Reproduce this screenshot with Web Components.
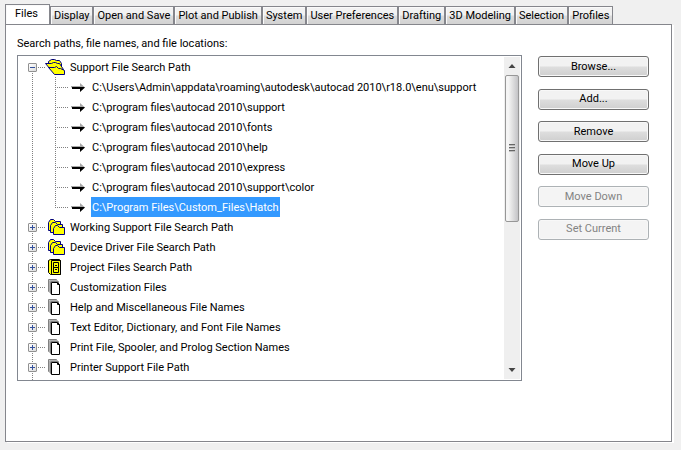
<!DOCTYPE html>
<html lang="en">
<head>
<meta charset="utf-8">
<title>Options</title>
<style>
  body {
    margin: 0;
    background-color: #f0f0f0;
    color: #000;
    font: 11px/16px Roboto, "Liberation Sans", sans-serif;
  }
</style>
</head>
<body>
<options-dialog>
  <tab-strip slot="tabs">
    <tab-button selected>Files</tab-button>
    <tab-button>Display</tab-button>
    <tab-button>Open and Save</tab-button>
    <tab-button>Plot and Publish</tab-button>
    <tab-button>System</tab-button>
    <tab-button>User Preferences</tab-button>
    <tab-button>Drafting</tab-button>
    <tab-button>3D Modeling</tab-button>
    <tab-button>Selection</tab-button>
    <tab-button>Profiles</tab-button>
  </tab-strip>
  <span slot="caption">Search paths, file names, and file locations:</span>
  <path-tree>
    <tree-node icon="open" expanded>Support File Search Path
      <tree-leaf slot="children">C:\Users\Admin\appdata\roaming\autodesk\autocad 2010\r18.0\enu\support</tree-leaf>
      <tree-leaf slot="children">C:\program files\autocad 2010\support</tree-leaf>
      <tree-leaf slot="children">C:\program files\autocad 2010\fonts</tree-leaf>
      <tree-leaf slot="children">C:\program files\autocad 2010\help</tree-leaf>
      <tree-leaf slot="children">C:\program files\autocad 2010\express</tree-leaf>
      <tree-leaf slot="children">C:\program files\autocad 2010\support\color</tree-leaf>
      <tree-leaf slot="children" selected>C:\Program Files\Custom_Files\Hatch</tree-leaf>
    </tree-node>
    <tree-node icon="folders">Working Support File Search Path</tree-node>
    <tree-node icon="folders">Device Driver File Search Path</tree-node>
    <tree-node icon="cabinet">Project Files Search Path</tree-node>
    <tree-node icon="pages">Customization Files</tree-node>
    <tree-node icon="pages">Help and Miscellaneous File Names</tree-node>
    <tree-node icon="pages">Text Editor, Dictionary, and Font File Names</tree-node>
    <tree-node icon="pages">Print File, Spooler, and Prolog Section Names</tree-node>
    <tree-node icon="pages">Printer Support File Path</tree-node>
  </path-tree>
  <push-button slot="actions">Browse...</push-button>
  <push-button slot="actions">Add...</push-button>
  <push-button slot="actions">Remove</push-button>
  <push-button slot="actions">Move Up</push-button>
  <push-button slot="actions" disabled>Move Down</push-button>
  <push-button slot="actions" disabled>Set Current</push-button>
</options-dialog>

<script>
const ICONS = {
  open: `
    <g fill="#ffff00" stroke="#000080" stroke-width="1">
      <path d="M3.5 7.5V4.5L6.5 2.5H9.5L11.5 3.5H14.5L16.5 6.5V12.5H9.5Z"/>
      <path d="M5.5 12.5L0.5 6.5H6.5L8.5 5.5H10.5L12.5 6.5H14.5L18.5 12.5Z"/>
      <path d="M9.5 17.5L3.5 10.5H9.5L11.5 9.5L13.5 11.5H15.5L19.5 13.5V17.5Z"/>
    </g>`,
  folders: `
    <g fill="#ffff00" stroke="#000080" stroke-width="1">
      <path d="M3.5 13.5V5.5L5.5 2.5H8.5L10.5 4.5H15.5V13.5Z"/>
      <path d="M5.5 15.5V8.5L7.5 5.5H10.5L12.5 7.5H17.5V15.5Z"/>
      <path d="M8.5 17.5V11.5L10.5 8.5H12.5L14.5 10.5H19.5V17.5Z"/>
    </g>`,
  cabinet: `
    <g fill="#ffff00" stroke="#000" stroke-width="1">
      <path d="M3.5 3.5L5.5 2.5H14.5L15.5 3.5V17.5H5.5L3.5 15.5Z"/>
      <path d="M6.5 3.5H15.5V17.5H6.5Z"/>
      <path d="M8.5 5.5H13.5V10.5H8.5ZM8.5 10.5H13.5V15.5H8.5Z"/>
    </g>
    <path d="M10 8.5H12M10 12.5H12" stroke="#000"/>`,
  pages: `
    <g fill="#fff" stroke-width="1">
      <path d="M3.5 2.5H11.5V14.5H3.5Z" stroke="#808080"/>
      <path d="M4.5 3.5H12.5V15.5H4.5Z" stroke="#b0b0b0"/>
      <path d="M5.5 4.5H13.5V16.5H5.5Z" stroke="#808080"/>
    </g>
    <path d="M6.5 5.5H12.5L14.5 7.5V17.5H6.5Z" fill="#fff" stroke="#000"/>
    <path d="M12.5 5.5V7.5H14.5" fill="none" stroke="#000"/>`
};

class OptionsDialog extends HTMLElement {
  constructor() {
    super();
    this.attachShadow({ mode: 'open' });
    this.shadowRoot.innerHTML = `
      <style>
        :host {
          display: flex;
          flex-direction: column;
          box-sizing: border-box;
          min-height: 100vh;
          padding: 4px 9px 8px 5px;
        }
        .panel {
          flex: 1;
          padding: 11px 22px 60px 11px;
          border: 1px solid #85868c;
          background-color: #fff;
          box-shadow: 2px 1px 0 #fff;
        }
        .caption {
          padding-bottom: 3px;
        }
        .columns {
          display: flex;
          align-items: flex-start;
          gap: 16px;
        }
        .tree {
          flex: 1;
          min-width: 0;
        }
        .actions {
          display: flex;
          flex-direction: column;
          justify-content: space-between;
          flex: none;
          width: 111px;
          height: 185px;
          padding-top: 1px;
          box-sizing: border-box;
        }
      </style>
      <slot name="tabs"></slot>
      <section class="panel">
        <div class="caption"><slot name="caption"></slot></div>
        <div class="columns">
          <div class="tree"><slot></slot></div>
          <div class="actions"><slot name="actions"></slot></div>
        </div>
      </section>
    `;
  }
}

class TabStrip extends HTMLElement {
  constructor() {
    super();
    this.attachShadow({ mode: 'open' });
    this.shadowRoot.innerHTML = `
      <style>
        :host {
          display: flex;
          align-items: flex-end;
          height: 20px;
        }
      </style>
      <slot></slot>
    `;
    this.setAttribute('role', 'tablist');
  }
}

class TabButton extends HTMLElement {
  constructor() {
    super();
    this.attachShadow({ mode: 'open' });
    this.shadowRoot.innerHTML = `
      <style>
        :host {
          display: block;
          flex: none;
        }
        button {
          display: block;
          box-sizing: border-box;
          height: 18px;
          padding: 0 3px;
          border: 1px solid #85868c;
          border-bottom: 0;
          background: linear-gradient(#f2f2f2 45%, #dcdcdc 55%, #d2d2d2);
          box-shadow: inset 1px 1px 0 #fafafa;
          color: inherit;
          font: inherit;
          white-space: nowrap;
        }
        :host([selected]) {
          margin-bottom: -1px;
        }
        :host([selected]) button {
          height: 21px;
          padding: 0 11px 3px 9px;
          background: #fff;
        }
      </style>
      <button type="button" role="tab"><slot></slot></button>
    `;
  }

  connectedCallback() {
    const button = this.shadowRoot.querySelector('button');
    button.setAttribute('aria-selected', this.hasAttribute('selected'));
  }
}

class PathTree extends HTMLElement {
  constructor() {
    super();
    this.attachShadow({ mode: 'open' });
    this.shadowRoot.innerHTML = `
      <style>
        :host {
          display: flex;
          border: 1px solid #828790;
          background-color: #fff;
        }
        .nodes {
          flex: 1;
          min-width: 0;
          padding-top: 1px;
        }
        .rest {
          height: 3px;
          margin-left: 14px;
          width: 1px;
          background: repeating-linear-gradient(#808080 0 1px, transparent 1px 2px);
        }
        .scrollbar {
          display: flex;
          flex-direction: column;
          width: 16px;
          margin: 1px;
          background-color: #efefef;
        }
        .scrollbar button {
          display: grid;
          place-items: center;
          height: 18px;
          padding: 0;
          border: 0;
          background: none;
        }
        .track {
          flex: 1;
        }
        .thumb {
          display: grid;
          place-items: center;
          box-sizing: border-box;
          width: 14px;
          height: 147px;
          margin: 0 1px;
          border: 1px solid #979797;
          border-radius: 2px;
          background: linear-gradient(90deg, #f5f5f5 20%, #e3e3e3 50%, #c3c3c6);
        }
      </style>
      <div class="nodes" role="tree">
        <slot></slot>
        <div class="rest"></div>
      </div>
      <div class="scrollbar">
        <button type="button" aria-label="Scroll up">
          <svg width="8" height="4"><path d="M0.5 4L4 0L7.5 4Z" fill="#444"/></svg>
        </button>
        <div class="track">
          <div class="thumb">
            <svg width="8" height="9"><path d="M1 .5H7M1 3.5H7M1 6.5H7" stroke="#666"/><path d="M1 1.5H7M1 4.5H7M1 7.5H7" stroke="#bbb"/></svg>
          </div>
        </div>
        <button type="button" aria-label="Scroll down">
          <svg width="8" height="4"><path d="M0.5 0L4 4L7.5 0Z" fill="#444"/></svg>
        </button>
      </div>
    `;
  }
}

class TreeNode extends HTMLElement {
  constructor() {
    super();
    this.attachShadow({ mode: 'open' });
    this.shadowRoot.innerHTML = `
      <style>
        :host {
          display: block;
          background: repeating-linear-gradient(#808080 0 1px, transparent 1px 2px) 14px 0 / 1px 100% no-repeat;
        }
        :host(:first-child) {
          background-position: 14px 10px;
        }
        .row {
          display: flex;
          align-items: center;
          height: 20px;
          padding-left: 10px;
          white-space: nowrap;
        }
        button {
          flex: none;
          box-sizing: border-box;
          width: 9px;
          height: 9px;
          padding: 0;
          border: 1px solid #919191;
          border-radius: 1px;
          background:
            linear-gradient(#33509b, #33509b) center / 5px 1px no-repeat,
            linear-gradient(#33509b, #33509b) center / 1px 5px no-repeat,
            linear-gradient(135deg, #fff, #dcdcdc);
        }
        :host([expanded]) button {
          background:
            linear-gradient(#33509b, #33509b) center / 5px 1px no-repeat,
            linear-gradient(135deg, #fff, #dcdcdc);
        }
        .stub {
          flex: none;
          width: 8px;
          height: 1px;
          background: repeating-linear-gradient(90deg, transparent 0 1px, #808080 1px 2px);
        }
        svg {
          flex: none;
          width: 20px;
          height: 20px;
          margin-right: 4px;
        }
        .label {
          padding: 3px 1px 1px;
        }
      </style>
      <div class="row">
        <button type="button" aria-label="Toggle"></button>
        <span class="stub"></span>
        <svg viewBox="0 0 20 20"></svg>
        <span class="label"><slot></slot></span>
      </div>
      <slot name="children"></slot>
    `;
    this.icon = this.shadowRoot.querySelector('svg');
    this.setAttribute('role', 'treeitem');
  }

  static get observedAttributes() {
    return ['icon'];
  }

  attributeChangedCallback(name, oldValue, newValue) {
    this.icon.innerHTML = ICONS[newValue] || '';
  }
}

class TreeLeaf extends HTMLElement {
  constructor() {
    super();
    this.attachShadow({ mode: 'open' });
    this.shadowRoot.innerHTML = `
      <style>
        :host {
          display: flex;
          align-items: center;
          height: 20px;
          padding-left: 37px;
          white-space: nowrap;
        }
        .elbow {
          flex: none;
          align-self: stretch;
          width: 14px;
          background:
            repeating-linear-gradient(#808080 0 1px, transparent 1px 2px) 0 0 / 1px 100% no-repeat,
            repeating-linear-gradient(90deg, #808080 0 1px, transparent 1px 2px) 0 10px / 100% 1px no-repeat;
        }
        :host(:last-child) .elbow {
          background-size: 1px 11px, 100% 1px;
        }
        svg {
          flex: none;
          width: 22px;
          height: 20px;
        }
        .label {
          padding: 3px 1px 1px;
        }
        :host([selected]) .label {
          background-color: #3399ff;
          color: #fff;
        }
      </style>
      <span class="elbow"></span>
      <svg viewBox="0 0 22 20">
        <path d="M2 9H11V6L16 10.5H2Z" fill="#a8a8a8"/>
        <path d="M3 10H15L16 10.5L11 15V12H3Z" fill="#000"/>
      </svg>
      <span class="label"><slot></slot></span>
    `;
    this.setAttribute('role', 'treeitem');
  }
}

class PushButton extends HTMLElement {
  constructor() {
    super();
    this.attachShadow({ mode: 'open' });
    this.shadowRoot.innerHTML = `
      <style>
        :host {
          display: block;
        }
        button {
          display: block;
          box-sizing: border-box;
          width: 100%;
          height: 21px;
          padding: 0;
          border: 1px solid #707070;
          border-radius: 3px;
          background: linear-gradient(#f2f2f2 45%, #dddddd 55%, #cfcfcf);
          box-shadow: inset 0 0 0 1px #f8f8f8;
          color: inherit;
          font: inherit;
        }
        button:disabled {
          border-color: #adb2b5;
          background: #f4f4f4;
          color: #838383;
        }
      </style>
      <button type="button"><slot></slot></button>
    `;
    this.button = this.shadowRoot.querySelector('button');
  }

  static get observedAttributes() {
    return ['disabled'];
  }

  attributeChangedCallback(name, oldValue, newValue) {
    this.button.disabled = newValue !== null;
  }
}

customElements.define('options-dialog', OptionsDialog);
customElements.define('tab-strip', TabStrip);
customElements.define('tab-button', TabButton);
customElements.define('path-tree', PathTree);
customElements.define('tree-node', TreeNode);
customElements.define('tree-leaf', TreeLeaf);
customElements.define('push-button', PushButton);
</script>
</body>
</html>
